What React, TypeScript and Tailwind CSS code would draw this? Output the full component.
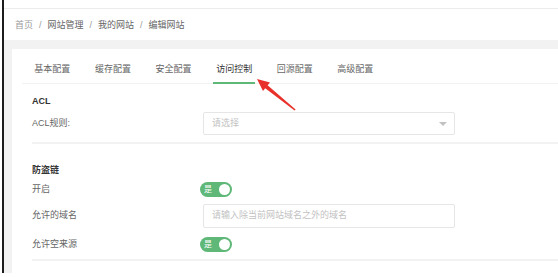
const font = { fontFamily: '"Liberation Sans", "Noto Sans CJK SC", sans-serif' };

const tabs = ["基本配置", "缓存配置", "安全配置", "访问控制", "回源配置", "高级配置"];
const crumbs = ["首页", "网站管理", "我的网站", "编辑网站"];

const Switch = () => (
  <div className="flex items-center justify-between w-[32px] h-[15px] rounded-full bg-[#5fb878] pl-[4px] pr-[2px]">
    <span className="text-[8px] leading-[8px] text-white">是</span>
    <span className="w-[11px] h-[11px] rounded-full bg-white" />
  </div>
);

const Arrow = () => (
  <svg
    className="absolute left-0 top-0 pointer-events-none"
    width="558"
    height="277"
    viewBox="0 0 558 277"
  >
    <polygon
      points="257,79 270,82.5 267.6,85.2 295.6,109.4 294.6,110.6 265.2,88.2 263,91"
      fill="#e8312a"
    />
  </svg>
);

export default function App() {
  return (
    <div className="relative w-[558px] h-[277px] bg-white text-[9px] overflow-hidden" style={font}>
      <div className="ml-[2px] h-[273px] border-l-2 border-[#1c1c1c] flex flex-col">
        <div className="h-[8px]" />
        <div className="h-[32px] border-t border-[#ececec] flex items-center pl-[11px] pt-[3px] text-[#666]">
          {crumbs.map((c, i) => (
            <div key={c} className="flex items-center">
              {i > 0 && <span className="mx-[6px] text-[#999]">/</span>}
              <span className={i === 0 ? "text-[#999]" : "text-[#666]"}>{c}</span>
            </div>
          ))}
        </div>
        <div className="flex-1 bg-[#f2f2f2] pt-[9px] pl-[8px]">
          <div className="h-full bg-white">
            <div className="ml-[10px] flex border-b border-[#f2f2f2] h-[35px]">
              {tabs.map((t) => (
                <div key={t} className="px-[12.3px] pt-[14px] flex">
                  <span
                    className={
                      "-mx-[3px] px-[3px] leading-[12px] h-[21px] pb-[7px] " +
                      (t === "访问控制"
                        ? "text-[#333] border-b-2 border-[#5fb878]"
                        : "text-[#666]")
                    }
                  >
                    {t}
                  </span>
                </div>
              ))}
            </div>

            <div className="pl-[20px]">
              <div className="pt-[11px] leading-[12px] font-bold text-[#333]">ACL</div>
              <div className="mt-[5px] flex items-center h-[23px]">
                <div className="w-[171px] text-[#666]">ACL规则:</div>
                <div className="w-[252px] h-[23px] border border-[#e6e6e6] rounded-[2px] flex items-center justify-between pl-[8px] pr-[7px]">
                  <span className="text-[#c2c2c2]">请选择</span>
                  <span className="w-0 h-0 border-l-[4px] border-r-[4px] border-t-[4px] border-l-transparent border-r-transparent border-t-[#c2c2c2]" />
                </div>
              </div>
              <div className="mt-[7px] h-[2px] bg-[#f2f2f2]" />

              <div className="mt-[20px] leading-[12px] font-bold text-[#333]">防盗链</div>
              <div className="mt-[6px] flex items-center h-[15px]">
                <div className="w-[168px] text-[#666]">开启</div>
                <Switch />
              </div>
              <div className="mt-[7px] flex items-center h-[24px]">
                <div className="w-[171px] text-[#666]">允许的域名</div>
                <div className="w-[252px] h-[24px] border border-[#e6e6e6] rounded-[2px] flex items-center pl-[8px]">
                  <span className="text-[#c2c2c2]">请输入除当前网站域名之外的域名</span>
                </div>
              </div>
              <div className="mt-[9px] flex items-center h-[15px]">
                <div className="w-[168px] text-[#666]">允许空来源</div>
                <Switch />
              </div>
              <div className="mt-[7px] h-[2px] bg-[#f2f2f2]" />
            </div>
          </div>
        </div>
      </div>
      <Arrow />
    </div>
  );
}
